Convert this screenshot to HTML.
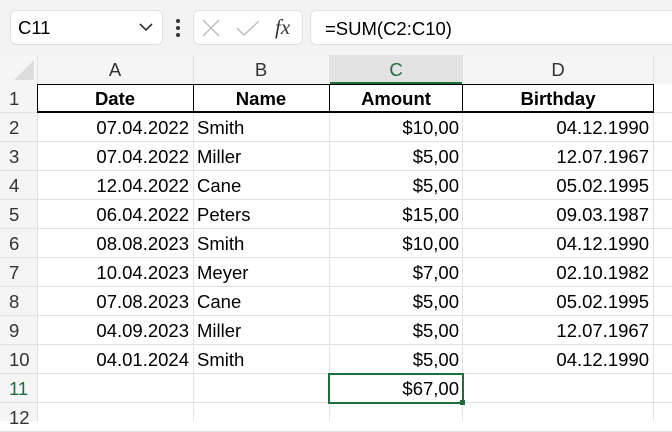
<!DOCTYPE html>
<html><head><style>
*{margin:0;padding:0;box-sizing:border-box}
body{width:672px;height:421px;overflow:hidden;background:#fff;font-family:"Liberation Sans","DejaVu Sans",sans-serif;position:relative;color:#000}
.top{position:absolute;left:0;top:0;width:672px;height:55px;background:#f3f3f3}
.box{position:absolute;background:#fff;border:1px solid #e1e1e1;border-radius:6px}
.a{position:absolute}
.cell{position:absolute;height:29px;line-height:29px;font-size:18.5px;white-space:nowrap}
.hl{position:absolute;background:#e1e1e1}
</style></head><body>
<div class="top"></div>
<div class="box" style="left:10px;top:10px;width:153px;height:35px"></div>
<div class="a" style="left:18px;top:17px;font-size:18.5px">C11</div>
<svg class="a" style="left:138px;top:22px" width="16" height="10"><path d="M2 2 L8 8 L14 2" fill="none" stroke="#333" stroke-width="1.6"/></svg>
<div class="a" style="left:176px;top:19px;width:4px;height:4px;background:#333;border-radius:2px"></div>
<div class="a" style="left:176px;top:26px;width:4px;height:4px;background:#333;border-radius:2px"></div>
<div class="a" style="left:176px;top:33px;width:4px;height:4px;background:#333;border-radius:2px"></div>
<div class="box" style="left:193px;top:10px;width:110px;height:35px"></div>
<svg class="a" style="left:200px;top:17px" width="100" height="22"><path d="M3 3 L19 19 M19 3 L3 19" stroke="#bdbdbd" stroke-width="1.4"/><path d="M37 11 L44 18 L59 4" fill="none" stroke="#bdbdbd" stroke-width="1.4"/><text x="75" y="17" font-family="Liberation Serif,serif" font-style="italic" font-size="21" fill="#333">fx</text></svg>
<div class="box" style="left:310px;top:10px;width:370px;height:35px"></div>
<div class="a" style="left:325px;top:18px;font-size:18.5px">=SUM(C2:C10)</div>

<div class="a" style="left:0;top:55px;width:672px;height:29px;background:#f5f5f5"></div>
<div class="a" style="left:329px;top:55px;width:134px;height:29px;background:#e3e3e3;border-bottom:2px solid #1e6e3e"></div>
<div class="a" style="left:0;top:55px;width:37px;height:366px;background:#f5f5f5"></div>
<svg class="a" style="left:14px;top:60px" width="20" height="20"><path d="M20 0 L20 20 L0 20 Z" fill="#dcdcdc"/></svg>
<div class="cell" style="left:37px;top:55px;width:156px;text-align:center;color:#333">A</div>
<div class="cell" style="left:193px;top:55px;width:136px;text-align:center;color:#333">B</div>
<div class="cell" style="left:329px;top:55px;width:134px;text-align:center;color:#1e6e3e">C</div>
<div class="cell" style="left:463px;top:55px;width:190px;text-align:center;color:#333">D</div>

<div class="hl" style="left:193px;top:55px;width:1px;height:366px"></div>
<div class="hl" style="left:329px;top:55px;width:1px;height:366px"></div>
<div class="hl" style="left:462px;top:55px;width:1px;height:366px"></div>
<div class="hl" style="left:653px;top:55px;width:1px;height:366px"></div>
<div class="hl" style="left:37px;top:55px;width:1px;height:366px"></div>
<div id="rows"></div>
<script>
var d=[["07.04.2022","Smith","$10,00","04.12.1990"],["07.04.2022","Miller","$5,00","12.07.1967"],["12.04.2022","Cane","$5,00","05.02.1995"],["06.04.2022","Peters","$15,00","09.03.1987"],["08.08.2023","Smith","$10,00","04.12.1990"],["10.04.2023","Meyer","$7,00","02.10.1982"],["07.08.2023","Cane","$5,00","05.02.1995"],["04.09.2023","Miller","$5,00","12.07.1967"],["04.01.2024","Smith","$5,00","04.12.1990"]];
var h="";
for(var r=1;r<=12;r++){var t=84+(r-1)*29;
h+='<div class="hl" style="left:0;top:'+(t+28)+'px;width:672px;height:1px"></div>';
h+='<div class="cell" style="left:0;top:'+t+'px;width:37px;padding-left:9px;color:'+(r==11?'#1e6e3e':'#333')+'">'+r+'</div>';}
h+='<div class="a" style="left:37px;top:84px;width:617px;height:29px;border:1px solid #000;border-bottom:2px solid #000"></div>';
h+='<div class="a" style="left:193px;top:84px;width:1px;height:29px;background:#000"></div><div class="a" style="left:329px;top:84px;width:1px;height:29px;background:#000"></div><div class="a" style="left:462px;top:84px;width:1px;height:29px;background:#000"></div>';
h+='<div class="cell" style="left:37px;top:84px;width:156px;text-align:center;font-weight:bold">Date</div><div class="cell" style="left:193px;top:84px;width:136px;text-align:center;font-weight:bold">Name</div><div class="cell" style="left:329px;top:84px;width:134px;text-align:center;font-weight:bold">Amount</div><div class="cell" style="left:463px;top:84px;width:190px;text-align:center;font-weight:bold">Birthday</div>';
for(var i=0;i<9;i++){var t=113+i*29;
h+='<div class="cell" style="left:37px;top:'+t+'px;width:152px;text-align:right">'+d[i][0]+'</div>';
h+='<div class="cell" style="left:197px;top:'+t+'px">'+d[i][1]+'</div>';
h+='<div class="cell" style="left:329px;top:'+t+'px;width:130px;text-align:right">'+d[i][2]+'</div>';
h+='<div class="cell" style="left:463px;top:'+t+'px;width:186px;text-align:right">'+d[i][3]+'</div>';}
h+='<div class="a" style="left:328px;top:373px;width:136px;height:31px;border:2px solid #1e6e3e"></div><div class="a" style="left:460px;top:400px;width:5px;height:5px;background:#1e6e3e"></div>';
h+='<div class="cell" style="left:329px;top:374px;width:130px;text-align:right">$67,00</div>';
document.getElementById("rows").innerHTML=h;
</script>
</body></html>
